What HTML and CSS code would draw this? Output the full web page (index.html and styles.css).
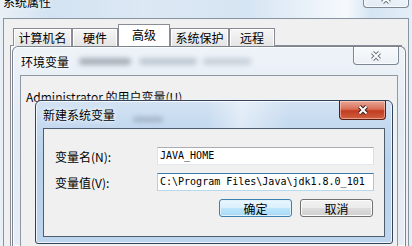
FILE: index.html
```html
<!DOCTYPE html>
<html lang="zh-CN">
<head>
    <meta charset="UTF-8">
    <meta name="viewport" content="width=device-width, initial-scale=1.0">
    <title>新建系统变量</title>
    <link rel="stylesheet" href="styles.css">
</head>
<body>

    <div class="main-title">系统属性</div>
    <div class="close-btn main-close">
        <svg width="12" height="10" viewBox="0 0 12 10"><path d="M2.5 1.5L9.5 8.5M9.5 1.5L2.5 8.5" stroke="#6b7480" stroke-width="4"/><path d="M2.5 1.5L9.5 8.5M9.5 1.5L2.5 8.5" stroke="#fff" stroke-width="2"/></svg>
    </div>

    <div class="main-client">
        <ul class="tabs">
            <li>计算机名</li>
            <li>硬件</li>
            <li class="active">高级</li>
            <li>系统保护</li>
            <li>远程</li>
        </ul>
        <div class="tab-page"></div>
    </div>

    <div class="env-dialog">
        <div class="env-title">
            <span class="title-text">环境变量</span>
            <span class="blur b1"></span>
            <span class="blur b2"></span>
            <span class="blur b3"></span>
        </div>
        <div class="close-btn env-close">
            <svg width="12" height="10" viewBox="0 0 12 10"><path d="M2.5 1.5L9.5 8.5M9.5 1.5L2.5 8.5" stroke="#6b7480" stroke-width="4"/><path d="M2.5 1.5L9.5 8.5M9.5 1.5L2.5 8.5" stroke="#fff" stroke-width="2"/></svg>
        </div>
        <div class="env-client">
            <p class="group-label">Administrator 的用户变量(U)</p>
        </div>
    </div>

    <div class="new-dialog">
        <div class="new-title">
            <span class="title-text">新建系统变量</span>
            <span class="blur b4"></span>
        </div>
        <div class="close-btn red-close">
            <svg width="12" height="10" viewBox="0 0 12 10"><path d="M2.5 1.5L9.5 8.5M9.5 1.5L2.5 8.5" stroke="#3b1f1a" stroke-width="4"/><path d="M2.5 1.5L9.5 8.5M9.5 1.5L2.5 8.5" stroke="#fff" stroke-width="2"/></svg>
        </div>
        <div class="new-client">
            <div class="field">
                <label>变量名(N):</label>
                <div class="textbox">JAVA_HOME</div>
            </div>
            <div class="field">
                <label>变量值(V):</label>
                <div class="textbox focused">C:\Program Files\Java\jdk1.8.0_101</div>
            </div>
            <div class="buttons">
                <button class="btn default">确定</button>
                <button class="btn">取消</button>
            </div>
        </div>
    </div>

</body>
</html>
```

FILE: styles.css
```css
* {
    box-sizing: border-box;
}
body {
    position: relative;
    width: 412px;
    height: 246px;
    margin: 0;
    overflow: hidden;
    font-family: "Noto Sans CJK SC", "Noto Sans", sans-serif;
    font-size: 12px;
    color: #000;
    background: linear-gradient(90deg, #e9f0f7 0, #d3e3f2 12%, #dce8f4 35%, #d6e5f3 60%, #f6f9fc 84%, #d5e5f3 90%, #e4eef7 100%);
}

/* ventana de fondo: Propiedades del sistema */
.main-title {
    height: 18px;
    padding-left: 3px;
    line-height: 4px;
    text-shadow: 0 0 5px #fff;
}
.close-btn {
    position: absolute;
    display: flex;
    align-items: center;
    justify-content: center;
    width: 46px;
    height: 18px;
    border: 1px solid #7d8794;
    border-top: 0;
    border-radius: 0 0 4px 4px;
    background: linear-gradient(rgba(255,255,255,.55), rgba(236,241,247,.55));
    box-shadow: inset 0 0 0 1px rgba(255,255,255,.7);
}
.main-close {
    left: 363px;
    top: -10px;
}
.main-client {
    width: 406px;
    height: 228px;
    margin-left: 3px;
    padding: 5px 6px 0;
    border: 1px solid #8994a2;
    border-bottom: 0;
    background-color: #f0f0f0;
}
.tabs {
    display: flex;
    align-items: flex-end;
    height: 22px;
    margin: 0 0 -1px 3px;
    padding: 0;
    list-style-type: none;
}
.tabs li {
    min-width: 46px;
    height: 18px;
    padding: 0 4.5px;
    border: 1px solid #898c95;
    border-bottom: 0;
    text-align: center;
    line-height: 17px;
    background: linear-gradient(#f6f6f6, #e4e4e4);
    box-shadow: inset 1px 1px #fff, inset -1px 0 #fff;
}
.tabs li.active {
    min-width: 52px;
    height: 22px;
    line-height: 20px;
    background: #fff;
}
.tab-page {
    height: 201px;
    border: 1px solid #898c95;
    border-bottom: 0;
    background-color: #fff;
}

/* dialogo Variables de entorno (inactivo) */
.env-dialog {
    position: absolute;
    left: 12px;
    top: 46px;
    width: 394px;
    height: 200px;
    padding: 0 7px;
    border: 1px solid #7b8592;
    border-bottom: 0;
    border-radius: 6px 6px 0 0;
    background: linear-gradient(#eef3f8, #e2eaf3 40%, #e6edf5);
    box-shadow: inset 0 0 0 1px rgba(255,255,255,.8);
}
.env-title {
    display: flex;
    align-items: center;
    height: 28px;
    padding-left: 1px;
}
.title-text {
    text-shadow: 0 0 6px #fff, 0 0 3px #fff;
}
.blur {
    height: 7px;
    border-radius: 4px;
    filter: blur(2.5px);
}
.b1 {
    width: 52px;
    margin-left: 10px;
    background-color: rgba(85,95,110,.45);
}
.b2 {
    width: 58px;
    margin-left: 8px;
    background-color: rgba(110,125,145,.35);
}
.b3 {
    width: 48px;
    margin-left: 6px;
    background-color: rgba(120,135,155,.3);
}
.env-close {
    top: 0;
    right: 6px;
}
.env-client {
    height: 171px;
    padding: 15px 0 0 5px;
    border: 1px solid #8f99a6;
    border-bottom: 0;
    background-color: #f0f0f0;
}
.group-label {
    margin: 0;
    line-height: 12px;
}

/* dialogo Nueva variable del sistema (activo) */
.new-dialog {
    position: absolute;
    left: 35px;
    top: 100px;
    width: 358px;
    height: 144px;
    padding: 0 7px 6px;
    border: 1px solid #33445a;
    border-radius: 6px 6px 3px 3px;
    background: linear-gradient(#d3e3f3 0, #c4d9ef 18%, #b9d2eb 40%, #bdd5ed 100%);
    box-shadow: inset 0 0 0 1px rgba(255,255,255,.75), 0 0 4px rgba(240,244,250,.9);
}
.new-title {
    display: flex;
    align-items: center;
    height: 27px;
    background: linear-gradient(90deg, transparent 48%, rgba(255,255,255,.45) 58%, transparent 72%);
}
.b4 {
    width: 30px;
    height: 5px;
    margin: 10px 0 0 18px;
    background-color: rgba(90,100,115,.35);
}
.red-close {
    top: 0;
    right: 6px;
    width: 47px;
    height: 19px;
    border-color: #5b1c11;
    background: linear-gradient(#e9a898 0, #d96f58 45%, #c23c22 55%, #d0603f 100%);
    box-shadow: inset 0 0 0 1px rgba(255,215,200,.55);
}
.new-client {
    height: 109px;
    padding: 18px 10px 0 11px;
    border: 1px solid #4e5d6e;
    background-color: #f0f0f0;
}
.field {
    display: flex;
    align-items: center;
    height: 18px;
    margin-bottom: 8px;
}
.field label {
    width: 102px;
}
.textbox {
    width: 217px;
    height: 18px;
    padding: 0 2px;
    border: 1px solid;
    border-color: #abadb3 #dbdfe6 #e3e9ef #e2e3ea;
    background-color: #fff;
    font-family: "DejaVu Sans Mono", monospace;
    font-size: 10px;
    line-height: 16px;
    white-space: nowrap;
}
.textbox.focused {
    border-color: #3d7bad #a4c9e3 #b7d9ed #b5cfe7;
}
.buttons {
    display: flex;
    justify-content: flex-end;
    gap: 8px;
    margin: 6px 1px 0 0;
}
.btn {
    width: 73px;
    height: 18px;
    padding: 0;
    border: 1px solid #707070;
    border-radius: 3px;
    font-family: inherit;
    font-size: 12px;
    line-height: 15px;
    color: #000;
    background: linear-gradient(#f2f2f2 0, #ebebeb 50%, #dddddd 50%, #cfcfcf 100%);
    box-shadow: inset 0 0 0 1px #fcfcfc;
}
.btn.default {
    border-color: #3c7fb1;
    background: linear-gradient(#eaf6fd 0, #d9f0fc 50%, #bee6fd 50%, #a7d9f5 100%);
    box-shadow: inset 0 0 0 1px #dff2fd;
}
```
